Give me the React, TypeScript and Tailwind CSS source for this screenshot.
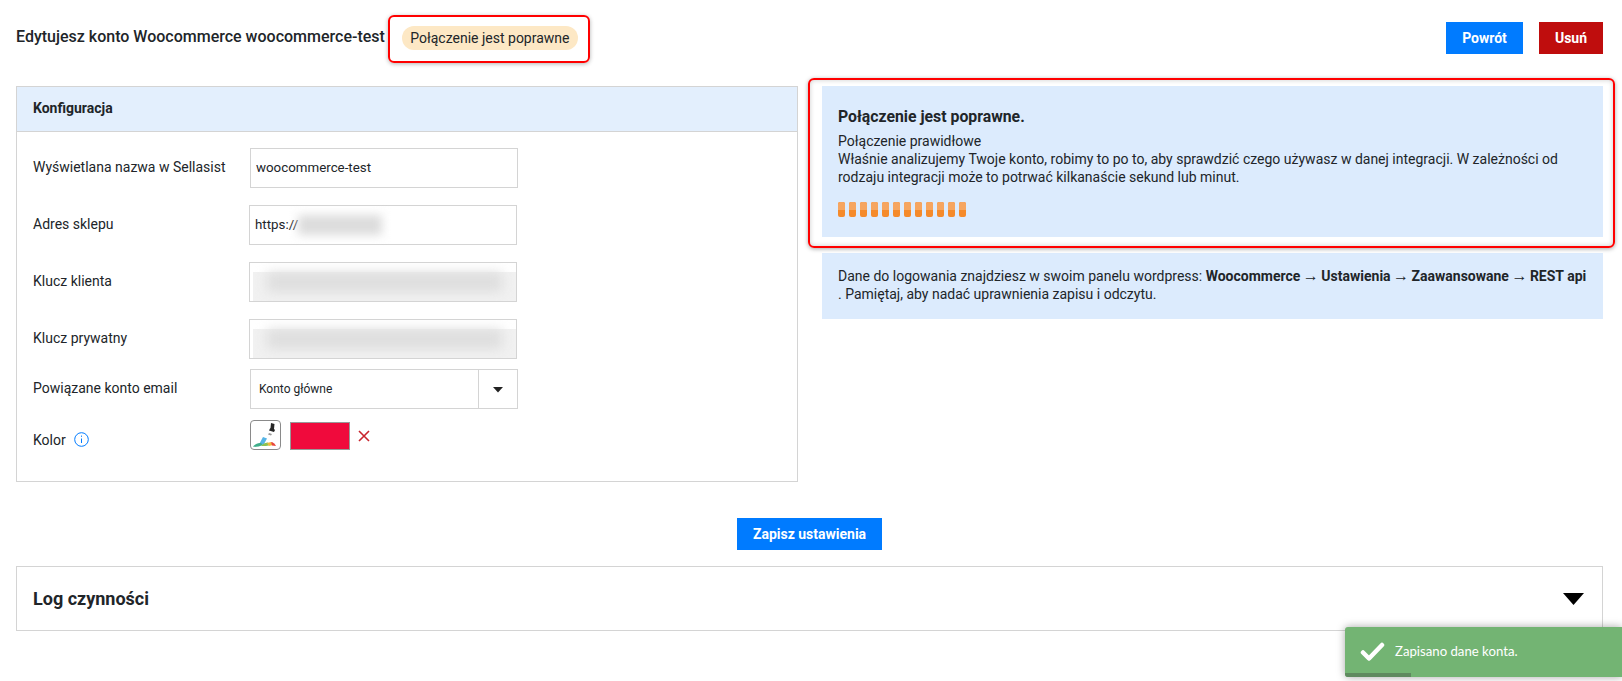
import React from "react";

function Field({
  label,
  labelW,
  children,
  mt,
}: {
  label: string;
  labelW: string;
  children: React.ReactNode;
  mt: string;
}) {
  return (
    <div className={`flex items-center ${mt}`}>
      <div className={`${labelW} shrink-0 -mt-[3px] text-[14px] leading-5 text-[#212529]`}>{label}</div>
      {children}
    </div>
  );
}

function BlurredInput() {
  return (
    <div className="relative h-10 w-[268px] overflow-hidden border border-[#d4d4d4] bg-white py-[3px] pl-[3px]">
      <div className="h-full w-full bg-[#f1f1f1]">
        <div className="mx-auto mt-[6px] h-[20px] w-[235px] bg-[#dedede] blur-[6px]" />
      </div>
    </div>
  );
}

function Arrow() {
  return <span className="-mx-[1px] text-[16px] leading-[0] font-normal">→</span>;
}

export default function App() {
  return (
    <div className="relative h-[681px] w-[1622px] overflow-hidden bg-white pl-4 pr-[19px] font-['Roboto','Liberation_Sans',sans-serif] text-[#212529]">
      <header className="flex h-[86px] items-start pt-[22px]">
        <h1 className="mt-[2px] text-[16px] leading-[26px] font-medium whitespace-nowrap text-[#212529]">
          Edytujesz konto Woocommerce woocommerce-test
        </h1>
        <div className="relative ml-[17px] mt-[4px]">
          <span className="flex h-6 w-[176px] items-center justify-center rounded-full bg-[#fde8c5] text-[14px] whitespace-nowrap">
            Połączenie jest poprawne
          </span>
          <div className="pointer-events-none absolute -top-[11px] -right-[12px] -bottom-[13px] -left-[14px] rounded-[6px] border-2 border-[#f00] shadow-[0_1px_4px_rgba(0,0,0,0.3)]" />
        </div>
        <div className="ml-auto flex gap-4">
          <button className="h-8 w-[77px] bg-[#007bff] text-sm font-bold text-white">Powrót</button>
          <button className="h-8 w-[64px] bg-[#bf0d0d] text-sm font-bold text-white">Usuń</button>
        </div>
      </header>

      <div className="flex items-start">
        <section className="h-[396px] w-[782px] shrink-0 border border-[#d4d4d4]">
          <div className="flex h-[45px] items-center border-b border-[#d4d4d4] bg-[#e3effd] px-4 pb-[2px] text-[14px] font-bold">
            Konfiguracja
          </div>
          <div className="px-4 pt-4">
            <Field label="Wyświetlana nazwa w Sellasist" labelW="w-[217px]" mt="">
              <div className="flex h-10 w-[268px] items-center border border-[#d4d4d4] pl-[5px] text-[13.33px]">
                woocommerce-test
              </div>
            </Field>
            <Field label="Adres sklepu" labelW="w-[216px]" mt="mt-[17px]">
              <div className="flex h-10 w-[268px] items-center border border-[#d4d4d4] pl-[5px] text-[13.33px]">
                https://
                <div className="h-[20px] w-[84px] bg-[#dcdcdc] blur-[5px]" />
              </div>
            </Field>
            <Field label="Klucz klienta" labelW="w-[216px]" mt="mt-[17px]">
              <BlurredInput />
            </Field>
            <Field label="Klucz prywatny" labelW="w-[216px]" mt="mt-[17px]">
              <BlurredInput />
            </Field>
            <Field label="Powiązane konto email" labelW="w-[217px]" mt="mt-[10px]">
              <div className="flex h-10 w-[268px] items-center border border-[#d4d4d4]">
                <span className="flex-1 pl-[8px] text-xs">Konto główne</span>
                <span className="flex h-full w-[39px] items-center justify-center border-l border-[#d4d4d4]">
                  <svg width="12" height="7" viewBox="0 0 12 7"><path d="M1 1h10L6 6.5z" fill="#222" /></svg>
                </span>
              </div>
            </Field>
            <div className="mt-[11px] flex items-start">
              <div className="flex w-[217px] shrink-0 items-center pt-[10px] text-[14px] leading-5">
                Kolor
                <svg className="ml-[8px] -mt-[2px]" width="15" height="15" viewBox="0 0 15 15" fill="none" stroke="#007bff">
                  <circle cx="7.5" cy="7.5" r="6.8" />
                  <path d="M7.5 6.5v4.5M7.5 3.6v1.2" />
                </svg>
              </div>
              <div className="flex h-[30px] w-[31px] items-center justify-center rounded-[4px] border border-[#8a8a8a]">
                <svg width="29" height="28" viewBox="0 0 29 28">
                  <path d="M20 2l3.5 1-.5 5 1 1-1 2-5-1.5 1-2 .5-.5z" fill="#262626" />
                  <path d="M18 12l3 1-1 1.5-3-1z" fill="#9a9a9a" />
                  <path d="M12 16l4 1.5-3.5 6.5-4-1.5z" fill="#56b4e6" />
                  <path d="M2 26c2-3 5-4.5 8-4l2 2c-3 1.5-7 2-10 2z" fill="#3fae8a" />
                  <path d="M10 25c2-2.5 5-3.5 7-3.5l1 3c-3 .5-5 .7-8 .5z" fill="#8cc152" />
                  <path d="M16 22l4-1 2 3-4 1z" fill="#f0b93c" />
                  <path d="M20 21c2 0 4 2 5 4l-4-.5z" fill="#e8453c" />
                </svg>
              </div>
              <div className="mt-[2px] ml-[9px] h-7 w-[60px] border border-[#999] bg-[#f00a3c]" />
              <svg className="mt-[10px] ml-[8px]" width="12" height="12" viewBox="0 0 12 12" stroke="#c9252d" strokeWidth="1.6">
                <path d="M1 1l10 10M11 1L1 11" />
              </svg>
            </div>
          </div>
        </section>

        <aside className="ml-6 flex-1">
          <div className="relative">
            <div className="h-[151px] bg-[#dcebfd] pt-[22px] pr-4 pl-4">
              <h2 className="text-[15.8px] leading-[18px] font-bold">Połączenie jest poprawne.</h2>
              <p className="mt-[6px] text-[14px] leading-[18px]">
                Połączenie prawidłowe
                <br />
                Właśnie analizujemy Twoje konto, robimy to po to, aby sprawdzić czego używasz w danej integracji. W zależności od rodzaju integracji może to potrwać kilkanaście sekund lub minut.
              </p>
              <div className="mt-[16px] flex gap-[4px]">
                {Array.from({ length: 12 }).map((_, i) => (
                  <div key={i} className="h-[15px] w-[7px] overflow-hidden rounded-[2px] bg-[#f58a2a]">
                    <div className="h-2 bg-[#f6a560]" />
                  </div>
                ))}
              </div>
            </div>
            <div className="pointer-events-none absolute -top-[8px] -right-[12px] -bottom-[11px] -left-[14px] rounded-[6px] border-2 border-[#f00] shadow-[0_1px_4px_rgba(0,0,0,0.35),inset_0_0_5px_rgba(0,0,0,0.2)]" />
          </div>
          <div className="mt-4 h-[66px] bg-[#dcebfd] px-4 pt-[14px] text-[14px] leading-[18px]">
            Dane do logowania znajdziesz w swoim panelu wordpress: <b className="font-bold whitespace-nowrap">Woocommerce <Arrow /> Ustawienia <Arrow /> Zaawansowane <Arrow /> REST api</b> . Pamiętaj, aby nadać uprawnienia zapisu i odczytu.
          </div>
        </aside>
      </div>

      <div className="mt-9 flex justify-center">
        <button className="h-8 w-[145px] bg-[#007bff] text-sm font-bold text-white">Zapisz ustawienia</button>
      </div>

      <div className="mt-[16px] flex h-[65px] items-center justify-between border border-[#d4d4d4] pr-[18px] pl-4">
        <span className="text-[18px] font-bold text-[#212529]">Log czynności</span>
        <svg width="21" height="12" viewBox="0 0 21 12"><path d="M0 0h21L10.5 12z" fill="#000" /></svg>
      </div>

      <div className="absolute top-[627px] right-0 flex h-[50px] w-[277px] items-center overflow-hidden rounded-l-[3px] bg-[#73b473] pl-[15px] text-white shadow-[0_0_8px_rgba(0,0,0,0.35)]">
        <svg width="25" height="20" viewBox="0 0 25 20" fill="none" stroke="#fff" strokeWidth="4.5" strokeLinecap="round" strokeLinejoin="round">
          <path d="M3 10.5l6 6L22 3" />
        </svg>
        <span className="ml-[10px] font-['Lato',sans-serif] text-[13.2px] font-normal">Zapisano dane konta.</span>
        <div className="absolute bottom-0 left-0 h-1 w-[66px] bg-[#5f8a5f]" />
      </div>
    </div>
  );
}
